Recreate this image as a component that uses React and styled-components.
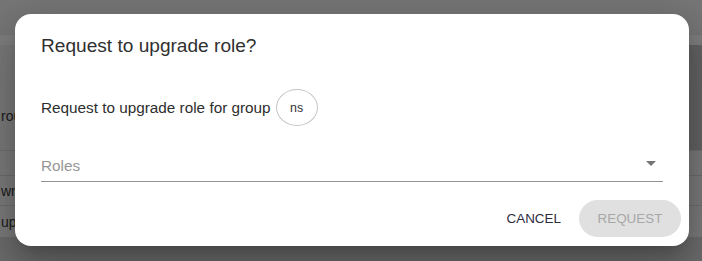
import React from "react";
import styled, { createGlobalStyle } from "styled-components";

const Global = createGlobalStyle`
  html, body { margin: 0; padding: 0; }
  body { font-family: "Liberation Sans", Arial, sans-serif; background: #6a6a6a; }
  * { box-sizing: border-box; }
`;

const Page = styled.div`
  position: relative;
  width: 702px;
  height: 261px;
  overflow: hidden;
  background: #d2d2d2;
  display: flex;
  flex-direction: column;
  font-family: "Liberation Sans", Arial, sans-serif;
`;

const Header = styled.div`
  height: 36px;
  flex: none;
  background: #ececec;
  border-bottom: 1px solid #f8f8f8;
`;

const Strip = styled.div`
  height: 9px;
  flex: none;
  background: #fdfdfd;
`;

const Upper = styled.div`
  height: 106px;
  flex: none;
  display: flex;
  border-bottom: 1px solid #dcdcdc;
`;

const LeftCell = styled.div`
  width: 120px;
  background: #f2f2f2;
  display: flex;
  align-items: center;
  padding-top: 36px;
`;

const RightFill = styled.div`
  flex: 1;
  background: #c6c6c6;
`;

const CellText = styled.span`
  margin-left: 1px;
  font-size: 14px;
  line-height: 16px;
  color: #3a3a3a;
`;

const TableRow = styled.div`
  height: ${(p) => p.$h}px;
  flex: none;
  display: flex;
  align-items: center;
  background: #f4f4f4;
  border-bottom: 1px solid #d8d8d8;
`;

const Footer = styled.div`
  flex: 1;
  background: #d6d6d6;
`;

const Backdrop = styled.div`
  position: absolute;
  inset: 0;
  padding: 0 0 1px 2px;
  background: rgba(0, 0, 0, 0.5);
  display: flex;
  align-items: center;
  justify-content: center;
`;

const Dialog = styled.div`
  width: 674px;
  background: #fff;
  border-radius: 16px;
  display: flex;
  flex-direction: column;
  box-shadow: 0 11px 15px -7px rgba(0, 0, 0, 0.2),
    0 24px 38px 3px rgba(0, 0, 0, 0.14), 0 9px 46px 8px rgba(0, 0, 0, 0.12);
`;

const Title = styled.h2`
  margin: 0;
  padding: 20px 26px 0;
  font-size: 19.1px;
  line-height: 24px;
  font-weight: 400;
  color: #303030;
`;

const Content = styled.div`
  padding: 0 26px;
  display: flex;
  flex-direction: column;
`;

const Line = styled.div`
  margin-top: 31px;
  display: flex;
  align-items: center;
  gap: 5px;
`;

const BodyText = styled.span`
  font-size: 15.3px;
  line-height: 18px;
  color: #2e2e2e;
`;

const Chip = styled.span`
  width: 42px;
  height: 37px;
  border: 1px solid #c4c4c4;
  border-radius: 50%;
  display: inline-flex;
  align-items: center;
  justify-content: center;
  font-size: 12.4px;
  color: #333;
`;

const Select = styled.div`
  margin-top: 31px;
  display: flex;
  align-items: flex-start;
  justify-content: space-between;
  padding-bottom: 6px;
  border-bottom: 1px solid #949494;
`;

const SelectLabel = styled.span`
  font-size: 15.3px;
  line-height: 18px;
  color: #969696;
`;

const Arrow = styled.svg`
  width: 10px;
  height: 5px;
  margin-top: 4px;
  margin-right: 7px;
  flex: none;
`;

const Actions = styled.div`
  display: flex;
  justify-content: flex-end;
  align-items: center;
  gap: 8px;
  padding: 18px 8px 9px;
`;

const Button = styled.button`
  height: 37px;
  display: inline-flex;
  align-items: center;
  justify-content: center;
  border: none;
  margin: 0;
  font-family: "Liberation Sans", Arial, sans-serif;
  font-size: 13.4px;
  line-height: 16px;
  letter-spacing: 0;
  text-transform: uppercase;
  cursor: pointer;
  padding: ${(p) => (p.$contained ? "0 18.7px" : "0 10px")};
  border-radius: ${(p) => (p.$contained ? "18.5px" : "4px")};
  background: ${(p) => (p.$contained ? "#e0e0e0" : "transparent")};
  color: ${(p) => (p.$contained ? "#a7a7a7" : "#2c2c3e")};
`;

export default function App() {
  return (
    <>
      <Global />
      <Page>
        <Header />
        <Strip />
        <Upper>
          <LeftCell>
            <CellText>rou</CellText>
          </LeftCell>
          <RightFill />
        </Upper>
        <TableRow $h={25} />
        <TableRow $h={30}>
          <CellText>wn</CellText>
        </TableRow>
        <TableRow $h={32}>
          <CellText>up</CellText>
        </TableRow>
        <Footer />
        <Backdrop>
          <Dialog role="dialog">
            <Title>Request to upgrade role?</Title>
            <Content>
              <Line>
                <BodyText>Request to upgrade role for group</BodyText>
                <Chip>ns</Chip>
              </Line>
              <Select>
                <SelectLabel>Roles</SelectLabel>
                <Arrow viewBox="0 0 10 5">
                  <path d="M0 0 L5 5 L10 0 Z" fill="#757575" />
                </Arrow>
              </Select>
            </Content>
            <Actions>
              <Button>Cancel</Button>
              <Button $contained disabled>
                Request
              </Button>
            </Actions>
          </Dialog>
        </Backdrop>
      </Page>
    </>
  );
}
